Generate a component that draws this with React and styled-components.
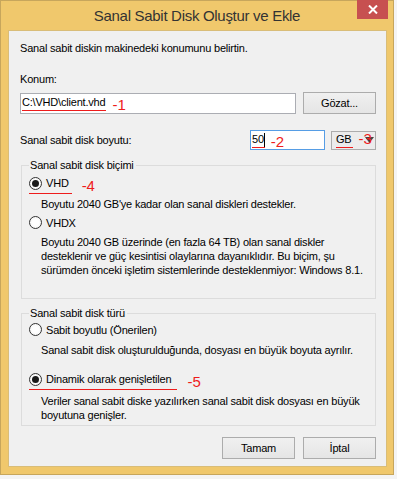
import styled, { createGlobalStyle } from 'styled-components';

const GlobalStyle = createGlobalStyle`
  body {
    margin: 0;
    background: #f4f4f4;
    font-family: 'Liberation Sans', Arial, sans-serif;
    font-size: 11px;
    letter-spacing: -0.2px;
    color: #000;
  }
`;

function Radio({ checked }) {
    return (
        <RadioCircle>
            {checked && <RadioDot />}
        </RadioCircle>
    );
}

function App() {
    return (
        <>
            <GlobalStyle />
            <Window>

                <TitleBar>
                    <Title>Sanal Sabit Disk Oluştur ve Ekle</Title>
                    <CloseButton>
                        <svg width="10" height="9" viewBox="0 0 10 9">
                            <path d="M1 0.5 L9 8.5 M9 0.5 L1 8.5" stroke="#fff" strokeWidth="2" />
                        </svg>
                    </CloseButton>
                </TitleBar>

                <Client>

                    <Text>Sanal sabit diskin makinedeki konumunu belirtin.</Text>

                    <Label>Konum:</Label>

                    <PathRow>
                        <Input>
                            <Marked>C:\VHD\client.vhd</Marked>
                            <Annot>-1</Annot>
                        </Input>
                        <Button>Gözat...</Button>
                    </PathRow>

                    <SizeRow>
                        <Text>Sanal sabit disk boyutu:</Text>
                        <SizeControls>
                            <Input focused>
                                <Marked>50</Marked>
                                <Caret />
                                <Annot>-2</Annot>
                            </Input>
                            <UnitBox>
                                <Marked>GB</Marked>
                                <ArrowWrap>
                                    <svg width="9" height="6" viewBox="0 0 9 6">
                                        <path d="M0 0 L9 0 L4.5 6 Z" fill="#444" />
                                    </svg>
                                    <AnnotOver>-3</AnnotOver>
                                </ArrowWrap>
                            </UnitBox>
                        </SizeControls>
                    </SizeRow>

                    <Group>
                        <Legend>Sanal sabit disk biçimi</Legend>
                        <RadioRow top={3}>
                            <MarkedRadio>
                                <Radio checked />
                                <span>VHD</span>
                            </MarkedRadio>
                            <Annot>-4</Annot>
                        </RadioRow>
                        <Desc top={6}>Boyutu 2040 GB'ye kadar olan sanal diskleri destekler.</Desc>
                        <RadioRow top={4}>
                            <Radio />
                            <span>VHDX</span>
                        </RadioRow>
                        <Desc top={5}>
                            Boyutu 2040 GB üzerinde (en fazla 64 TB) olan sanal diskler<br />
                            desteklenir ve güç kesintisi olaylarına dayanıklıdır. Bu biçim, şu<br />
                            sürümden önceki işletim sistemlerinde desteklenmiyor: Windows 8.1.
                        </Desc>
                    </Group>

                    <Group second>
                        <Legend>Sanal sabit disk türü</Legend>
                        <RadioRow top={1}>
                            <Radio />
                            <span>Sabit boyutlu (Önerilen)</span>
                        </RadioRow>
                        <Desc top={6}>Sanal sabit disk oluşturulduğunda, dosyası en büyük boyuta ayrılır.</Desc>
                        <RadioRow top={15}>
                            <MarkedRadio long>
                                <Radio checked />
                                <span>Dinamik olarak genişletilen</span>
                            </MarkedRadio>
                            <Annot>-5</Annot>
                        </RadioRow>
                        <Desc top={7}>
                            Veriler sanal sabit diske yazılırken sanal sabit disk dosyası en büyük<br />
                            boyutuna genişler.
                        </Desc>
                    </Group>

                    <ButtonRow>
                        <Button>Tamam</Button>
                        <Button>İptal</Button>
                    </ButtonRow>

                </Client>

            </Window>
        </>
    );
}

export default App;


const Window = styled.div`
    width: 394px;
    height: 475px;
    box-sizing: border-box;
    background: #f0c86c;
    border: 1px solid #c7a65c;
    display: flex;
    flex-direction: column;
`;

const TitleBar = styled.div`
    height: 29px;
    flex-shrink: 0;
    display: grid;
    grid-template-columns: 1fr auto 1fr;
    align-items: start;
`;

const Title = styled.div`
    grid-column: 2;
    padding-top: 6px;
    font-size: 15px;
    letter-spacing: -0.3px;
    color: #333;
    white-space: nowrap;
`;

const CloseButton = styled.div`
    grid-column: 3;
    justify-self: end;
    width: 31px;
    height: 19px;
    margin-right: 5px;
    margin-top: -1px;
    background: #c75050;
    display: flex;
    align-items: center;
    justify-content: center;
`;

const Client = styled.div`
    flex: 1;
    margin: 0 6px 7px 7px;
    background: #f0f0f0;
    border: 1px solid #d9bd78;
    padding: 10px 10px 0 11px;
    display: flex;
    flex-direction: column;
`;

const Text = styled.div`
    line-height: 15px;
    white-space: nowrap;
`;

const Label = styled(Text)`
    margin-top: 16px;
`;

const PathRow = styled.div`
    margin-top: 5px;
    display: flex;
    align-items: center;
    gap: 7px;
`;

const Input = styled.div`
    flex: 1;
    height: ${p => p.focused ? 20 : 21}px;
    box-sizing: border-box;
    background: #fff;
    border: 1px solid ${p => p.focused ? '#569de5' : '#abadb3'};
    padding-left: 1px;
    display: flex;
    align-items: center;
    white-space: nowrap;
`;

const Marked = styled.span`
    display: inline-block;
    line-height: 15px;
    border-bottom: 1px solid #ee1c1c;
    padding-right: 1px;
`;

const Caret = styled.span`
    width: 1px;
    height: 14px;
    background: #000;
    margin-left: -1px;
`;

const Annot = styled.span`
    color: #ee1c1c;
    font-size: 15px;
    letter-spacing: 0;
    margin-left: 6px;
    margin-top: 3px;
`;

const Button = styled.div`
    width: 73px;
    height: 22px;
    box-sizing: border-box;
    border: 1px solid #acacac;
    background: linear-gradient(#f0f0f0, #e5e5e5);
    display: flex;
    align-items: center;
    justify-content: center;
`;

const SizeRow = styled.div`
    margin-top: 16px;
    display: flex;
    align-items: center;
    justify-content: space-between;
`;

const SizeControls = styled.div`
    display: flex;
    align-items: center;
    gap: 6px;
    width: 126px;
`;

const UnitBox = styled.div`
    width: 45px;
    height: 19px;
    box-sizing: border-box;
    border: 1px solid #acacac;
    background: #ececec;
    display: flex;
    align-items: center;
    padding-left: 4px;
    gap: 12px;
`;

const ArrowWrap = styled.span`
    position: relative;
    display: flex;
    align-items: center;
`;

const AnnotOver = styled.span`
    position: absolute;
    left: -6px;
    top: -7px;
    color: #ee1c1c;
    font-size: 15px;
    letter-spacing: 0;
`;

const Group = styled.fieldset`
    margin: ${p => p.second ? 7 : 8}px 0 0 1px;
    padding: 0 10px ${p => p.second ? 3 : 21}px 7px;
    border: 1px solid #dcdcdc;
    min-width: 0;
`;

const Legend = styled.legend`
    padding: 0 2px 0 1px;
    line-height: 15px;
`;

const RadioRow = styled.div`
    margin-top: ${p => p.top}px;
    height: 15px;
    display: flex;
    align-items: center;
    gap: 4px;
    white-space: nowrap;
`;

const MarkedRadio = styled.span`
    display: flex;
    align-items: center;
    gap: 4px;
    padding-bottom: 3px;
    margin-bottom: -3px;
    padding-right: ${p => p.long ? 6 : 3}px;
    border-bottom: 1px solid #ee1c1c;
`;

const RadioCircle = styled.span`
    width: 13px;
    height: 13px;
    box-sizing: border-box;
    border-radius: 50%;
    border: 1px solid #333;
    background: radial-gradient(circle, #fff 40%, #ececec 100%);
    display: flex;
    align-items: center;
    justify-content: center;
`;

const RadioDot = styled.span`
    width: 7px;
    height: 7px;
    border-radius: 50%;
    background: #1a1a1a;
`;

const Desc = styled.div`
    margin-top: ${p => p.top}px;
    margin-left: 12px;
    line-height: 14px;
    white-space: nowrap;
`;

const ButtonRow = styled.div`
    margin-top: 11px;
    display: flex;
    justify-content: flex-end;
    gap: 8px;
`;
